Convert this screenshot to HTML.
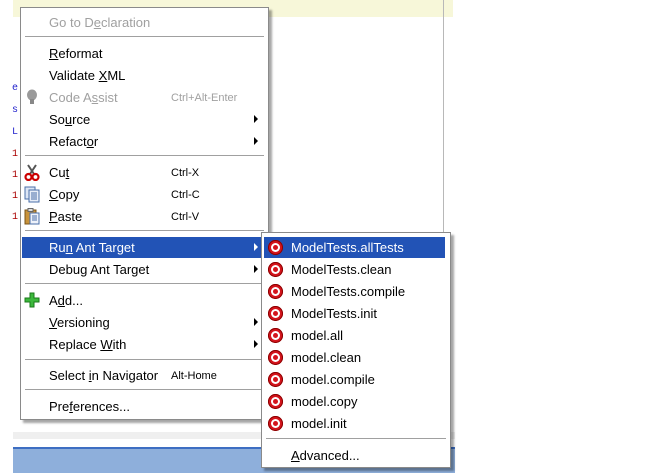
<!DOCTYPE html>
<html><head><style>
*{margin:0;padding:0;box-sizing:border-box}
body{width:650px;height:473px;background:#fff;position:relative;overflow:hidden;font-family:"Liberation Sans",sans-serif;font-size:13px;color:#000}
.a{position:absolute}
.menu{position:absolute;background:#fff;border:1px solid #8a8a8a;box-shadow:3px 3px 2px rgba(0,0,0,0.35)}
.it{position:absolute;left:0;right:0;height:21px;line-height:22px;white-space:nowrap}
.it .t{position:absolute;left:28px}
.it .k{position:absolute;left:150px;font-size:11px}
.it .ar{position:absolute;right:10px;top:6px;width:0;height:0;border-left:4px solid #000;border-top:4px solid transparent;border-bottom:4px solid transparent}
.hl{background:#2253b6;color:#fff}
.hl .ar{border-left-color:#fff}
.dis{color:#a0a0a0}
.sep{position:absolute;left:4px;right:4px;height:2px;border-top:1px solid #a0a0a0;border-bottom:1px solid #fff}
u{text-decoration:underline}
.sub .it .t{left:29px}
.ic{position:absolute;left:4px;top:3px;width:15px;height:15px;border-radius:50%;background:#d4141c;box-shadow:inset 0 0 0 1px #8a0000}
.ic:before{content:"";position:absolute;left:3px;top:3px;width:9px;height:9px;border-radius:50%;background:#fff}
.ic:after{content:"";position:absolute;left:5px;top:5px;width:5px;height:5px;border-radius:50%;background:#d4141c}
</style></head><body>
<div class="a" style="left:13px;top:0;width:440px;height:17px;background:#f7f7d9"></div>
<div class="a" style="left:443px;top:0;width:1px;height:432px;background:#b8b8b8"></div>
<div class="a" style="left:13px;top:432px;width:442px;height:7px;background:#efefef"></div>
<div class="a" style="left:13px;top:447px;width:442px;height:2px;background:#3d6ec2"></div>
<div class="a" style="left:13px;top:449px;width:442px;height:24px;background:#8eafdb"></div>
<div class="a" style="left:12px;top:78px;color:#22c;font-size:10px;line-height:22px;font-family:'Liberation Mono',monospace">e<br>s<br>L</div>
<div class="a" style="left:12px;top:144px;color:#a00;font-size:10px;line-height:21px;font-family:'Liberation Mono',monospace">1<br>1<br>1<br>1</div>

<div class="menu" style="left:20px;top:7px;width:249px;height:413px">
<div class="it dis" style="top:4px"><span class="t">Go to D<u>e</u>claration</span></div>
<div class="sep" style="top:28px"></div>
<div class="it" style="top:35px"><span class="t"><u>R</u>eformat</span></div>
<div class="it" style="top:57px"><span class="t">Validate <u>X</u>ML</span></div>
<div class="it dis" style="top:79px"><svg class="a" style="left:4px;top:2px" width="14" height="17"><ellipse cx="7" cy="6" rx="5" ry="5.5" fill="#9a9a9a"/><rect x="5" y="10" width="4" height="5" fill="#888"/></svg><span class="t">Code A<u>s</u>sist</span><span class="k">Ctrl+Alt-Enter</span></div>
<div class="it" style="top:101px"><span class="t">So<u>u</u>rce</span><span class="ar"></span></div>
<div class="it" style="top:123px"><span class="t">Refact<u>o</u>r</span><span class="ar"></span></div>
<div class="sep" style="top:147px"></div>
<div class="it" style="top:154px"><svg class="a" style="left:3px;top:2px" width="16" height="17"><path d="M4 1L10 10M12 1L6 10" stroke="#555" stroke-width="2"/><circle cx="4.5" cy="13" r="3" fill="none" stroke="#c00" stroke-width="2.2"/><circle cx="11.5" cy="13" r="3" fill="none" stroke="#c00" stroke-width="2.2"/></svg><span class="t">Cu<u>t</u></span><span class="k">Ctrl-X</span></div>
<div class="it" style="top:176px"><svg class="a" style="left:3px;top:2px" width="16" height="17"><rect x="1" y="1" width="10" height="12" fill="#dde6f5" stroke="#4a6fa8"/><rect x="5" y="4" width="10" height="12" fill="#e8eef8" stroke="#4a6fa8"/><path d="M7 7h6M7 9h6M7 11h6M7 13h6" stroke="#4a6fa8"/></svg><span class="t"><u>C</u>opy</span><span class="k">Ctrl-C</span></div>
<div class="it" style="top:198px"><svg class="a" style="left:3px;top:2px" width="16" height="17"><rect x="1" y="2" width="11" height="14" fill="#c8923a" stroke="#7a5418"/><rect x="4" y="0.5" width="5" height="3" fill="#ddd" stroke="#666"/><rect x="6" y="5" width="9" height="11" fill="#eef2fa" stroke="#4a6fa8"/><path d="M8 8h5M8 10h5M8 12h5" stroke="#4a6fa8"/></svg><span class="t"><u>P</u>aste</span><span class="k">Ctrl-V</span></div>
<div class="sep" style="top:222px"></div>
<div class="it hl" style="top:229px;left:1px;right:3px"><span class="t" style="left:27px">Ru<u>n</u> Ant Target</span><span class="ar" style="right:7px"></span></div>
<div class="it" style="top:251px"><span class="t">Debu<u>g</u> Ant Target</span><span class="ar"></span></div>
<div class="sep" style="top:275px"></div>
<div class="it" style="top:282px"><svg class="a" style="left:3px;top:2px" width="16" height="16"><path d="M6 1h4v5h5v4h-5v5h-4v-5h-5v-4h5z" fill="#3cb83c" stroke="#1a7a1a"/></svg><span class="t">A<u>d</u>d...</span></div>
<div class="it" style="top:304px"><span class="t"><u>V</u>ersioning</span><span class="ar"></span></div>
<div class="it" style="top:326px"><span class="t">Replace <u>W</u>ith</span><span class="ar"></span></div>
<div class="sep" style="top:351px"></div>
<div class="it" style="top:357px"><span class="t">Select <u>i</u>n Navigator</span><span class="k">Alt-Home</span></div>
<div class="sep" style="top:381px"></div>
<div class="it" style="top:388px"><span class="t">Pre<u>f</u>erences...</span></div>
</div>

<div class="menu sub" style="left:261px;top:232px;width:190px;height:236px">
<div class="it hl" style="top:4px;left:2px;right:5px"><span class="ic"></span><span class="t" style="left:27px">ModelTests.allTests</span></div>
<div class="it" style="top:26px"><span class="ic" style="left:6px"></span><span class="t">ModelTests.clean</span></div>
<div class="it" style="top:48px"><span class="ic" style="left:6px"></span><span class="t">ModelTests.compile</span></div>
<div class="it" style="top:70px"><span class="ic" style="left:6px"></span><span class="t">ModelTests.init</span></div>
<div class="it" style="top:92px"><span class="ic" style="left:6px"></span><span class="t">model.all</span></div>
<div class="it" style="top:114px"><span class="ic" style="left:6px"></span><span class="t">model.clean</span></div>
<div class="it" style="top:136px"><span class="ic" style="left:6px"></span><span class="t">model.compile</span></div>
<div class="it" style="top:158px"><span class="ic" style="left:6px"></span><span class="t">model.copy</span></div>
<div class="it" style="top:180px"><span class="ic" style="left:6px"></span><span class="t">model.init</span></div>
<div class="sep" style="top:205px"></div>
<div class="it" style="top:212px"><span class="t"><u>A</u>dvanced...</span></div>
</div>
</body></html>
